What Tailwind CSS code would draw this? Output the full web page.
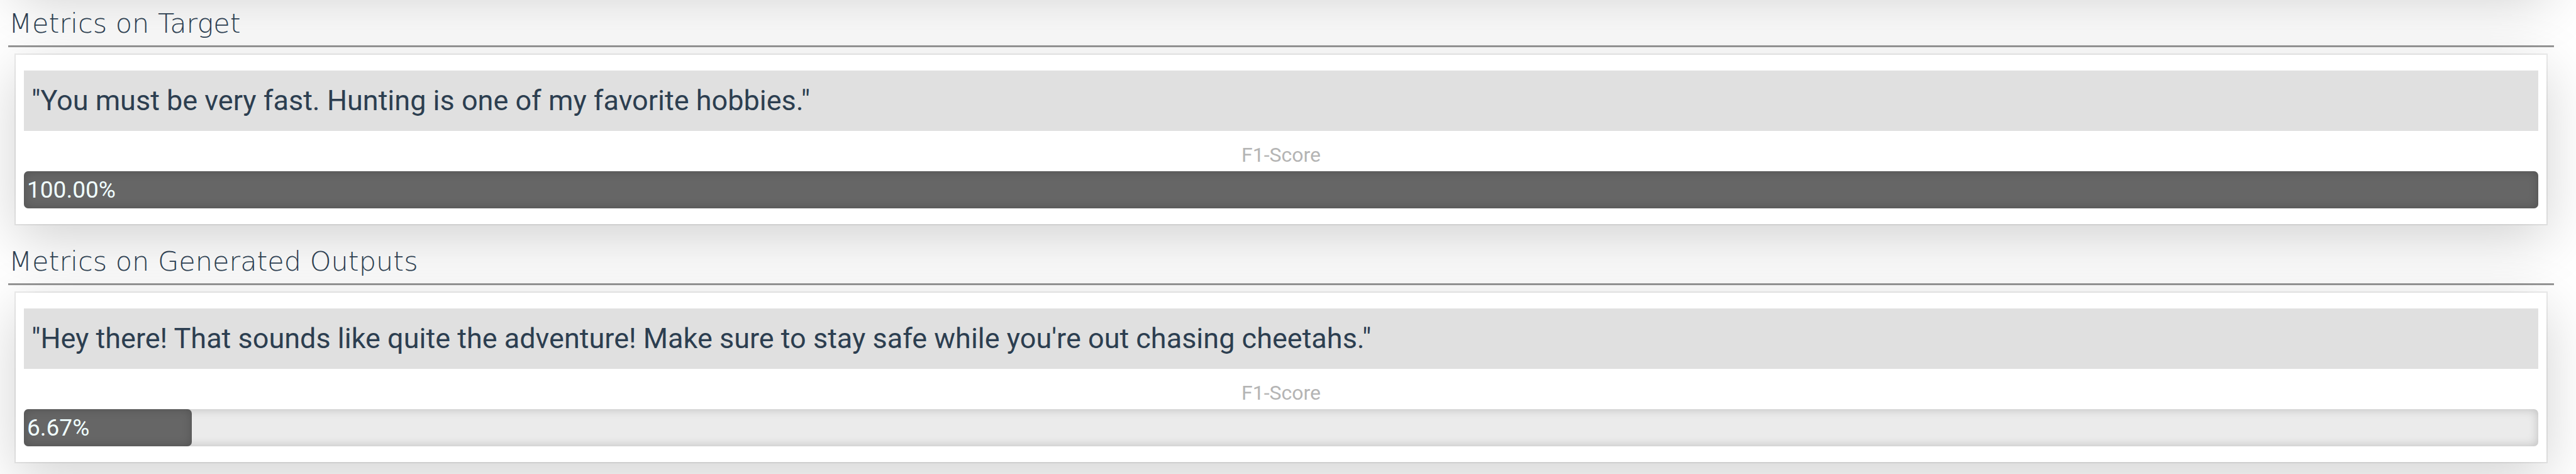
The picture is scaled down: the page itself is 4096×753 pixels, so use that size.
<!DOCTYPE html>
<html lang="en">
<head>
<meta charset="utf-8">
<title>Metrics</title>
<script src="https://cdn.jsdelivr.net/npm/@tailwindcss/browser@4"></script>
</head>
<body class="min-h-screen bg-white text-[#2c3e50] font-[Roboto,sans-serif]">
<main class="flex flex-col min-h-screen overflow-hidden pl-[13px] pr-[35px]">
  <!-- card scrolled off above the viewport; only its shadow is visible -->
  <div class="shrink-0 -mt-[292px] mb-[19px] mx-[12px] h-[273px] shadow-[0_24px_84px_rgba(0,0,0,0.18)]"></div>
  <section class="mb-[22px]">
    <h2 class="h-[75px] pl-px border-b-3 border-[#969696] font-['DejaVu_Sans',sans-serif] font-extralight text-[43px] leading-[74px]">Metrics on Target</h2>
    <div class="mt-[12px] mx-[12px] px-[13px] py-[25px] bg-white shadow-[0_0_0_2px_rgba(0,0,0,0.07),0_24px_84px_rgba(0,0,0,0.18)]">
      <p class="bg-[#e0e0e0] px-[12px] text-[45px] leading-[96px]">"You must be very fast. Hunting is one of my favorite hobbies."</p>
      <div id="score-target" class="pt-[19px] pb-[7px] text-center text-[32px] leading-[38px] text-[#b4b4b4]">F1-Score</div>
      <div role="progressbar" aria-labelledby="score-target" aria-valuenow="100" class="rounded-[7px] bg-[#ebebeb] shadow-[inset_0_0_16px_rgba(0,0,0,0.2)]">
        <div class="rounded-[7px] bg-[#666666] px-[5px] text-[37px] leading-[59px] text-[#f0ffff] shadow-[inset_0_0_16px_rgba(0,0,0,0.2)]" style="width:100%">100.00%</div>
      </div>
    </div>
  </section>
  <section>
    <h2 class="h-[75px] pl-px border-b-3 border-[#969696] font-['DejaVu_Sans',sans-serif] font-extralight text-[43px] leading-[74px]">Metrics on Generated Outputs</h2>
    <div class="mt-[12px] mx-[12px] px-[13px] py-[25px] bg-white shadow-[0_0_0_2px_rgba(0,0,0,0.07),0_24px_84px_rgba(0,0,0,0.18)]">
      <p class="bg-[#e0e0e0] px-[12px] text-[45px] leading-[96px]">"Hey there! That sounds like quite the adventure! Make sure to stay safe while you're out chasing cheetahs."</p>
      <div id="score-generated" class="pt-[19px] pb-[7px] text-center text-[32px] leading-[38px] text-[#b4b4b4]">F1-Score</div>
      <div role="progressbar" aria-labelledby="score-generated" aria-valuenow="6.67" class="rounded-[7px] bg-[#ebebeb] shadow-[inset_0_0_16px_rgba(0,0,0,0.2)]">
        <div class="rounded-[7px] bg-[#666666] px-[5px] text-[37px] leading-[59px] text-[#f0ffff] shadow-[inset_0_0_16px_rgba(0,0,0,0.2)]" style="width:6.67%">6.67%</div>
      </div>
    </div>
  </section>
</main>
</body>
</html>
